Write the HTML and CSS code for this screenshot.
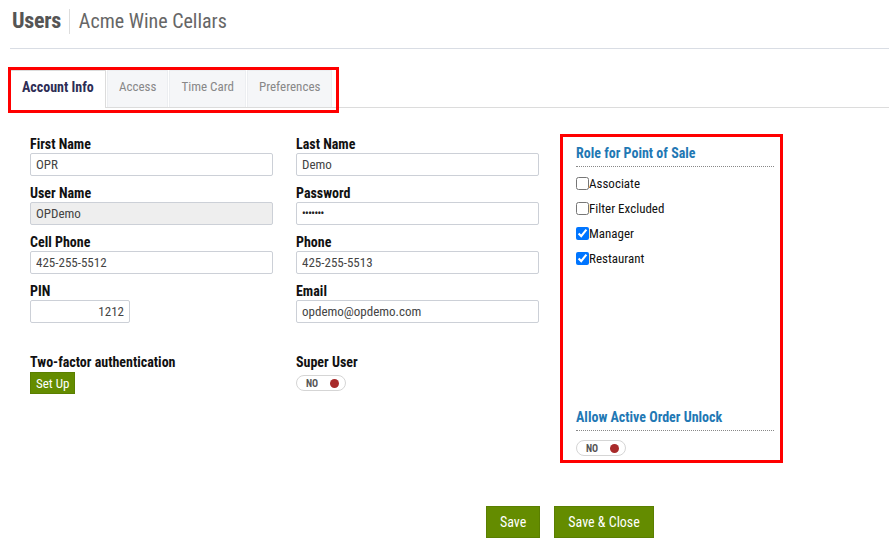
FILE: index.html
```html
<!DOCTYPE html>
<html lang="en">
<head>
<meta charset="UTF-8">
<meta name="viewport" content="width=device-width, initial-scale=1.0">
<title>Users - Acme Wine Cellars</title>
<link rel="stylesheet" href="styles.css">
</head>
<body>

<div class="page-head">
  <h1>Users</h1>
  <span class="sep"></span>
  <span class="store">Acme Wine Cellars</span>
</div>

<div class="tabs">
  <div class="tab active">Account Info</div>
  <div class="tab">Access</div>
  <div class="tab">Time Card</div>
  <div class="tab">Preferences</div>
  <div class="mark mark-tabs"></div>
</div>

<div class="content">
  <div class="form">
    <div class="field">
      <label>First Name</label>
      <input type="text" value="OPR">
    </div>
    <div class="field">
      <label>Last Name</label>
      <input type="text" value="Demo">
    </div>
    <div class="field">
      <label>User Name</label>
      <input type="text" value="OPDemo" class="readonly" readonly>
    </div>
    <div class="field">
      <label>Password</label>
      <input type="text" value="•••••••" class="pw">
    </div>
    <div class="field">
      <label>Cell Phone</label>
      <input type="text" value="425-255-5512">
    </div>
    <div class="field">
      <label>Phone</label>
      <input type="text" value="425-255-5513">
    </div>
    <div class="field">
      <label>PIN</label>
      <input type="text" value="1212" class="pin">
    </div>
    <div class="field">
      <label>Email</label>
      <input type="text" value="opdemo@opdemo.com">
    </div>
    <div class="field extra">
      <label>Two-factor authentication</label>
      <button class="btn btn-small">Set Up</button>
    </div>
    <div class="field extra">
      <label>Super User</label>
      <div class="toggle"><span>NO</span><i></i></div>
    </div>
  </div>

  <div class="panel">
    <h3>Role for Point of Sale</h3>
    <label class="check"><input type="checkbox">Associate</label>
    <label class="check"><input type="checkbox">Filter Excluded</label>
    <label class="check"><input type="checkbox" checked>Manager</label>
    <label class="check"><input type="checkbox" checked>Restaurant</label>

    <div class="panel-bottom">
      <h3>Allow Active Order Unlock</h3>
      <div class="toggle"><span>NO</span><i></i></div>
    </div>
  </div>
</div>

<div class="actions">
  <button class="btn">Save</button>
  <button class="btn">Save &amp; Close</button>
</div>

</body>
</html>
```

FILE: styles.css
```css
body {
  margin: 0;
  font-family: "Roboto Condensed", "Liberation Sans Narrow", "DejaVu Sans Condensed", sans-serif;
  color: #111;
  background: #fff;
}

.page-head {
  display: flex;
  align-items: flex-start;
  box-sizing: border-box;
  height: 49px;
  margin-left: 10px;
  padding: 8px 0 0 2px;
  border-bottom: 1px solid #d9dde4;
}

.page-head h1 {
  margin: 0;
  font-size: 22px;
  line-height: 26px;
  font-weight: bold;
  color: #555;
  letter-spacing: -0.3px;
}

.page-head .sep {
  width: 1px;
  height: 25px;
  background: #ddd;
  margin: 1px 9px 0 8px;
}

.page-head .store {
  font-size: 20px;
  line-height: 26px;
  color: #666;
}

.tabs {
  position: relative;
  display: flex;
  margin: 21px 0 0 10px;
  border-bottom: 1px solid #dcdcdc;
  height: 37px;
}

.tab {
  display: flex;
  align-items: center;
  padding: 0 11px 5px;
  font-size: 13px;
  color: #888;
  background: #f5f6f8;
  border: 1px solid #eceef1;
  border-bottom: none;
  margin-right: 1px;
}

.tab.active {
  width: 72px;
  font-size: 14px;
  background: #fff;
  color: #2d2d55;
  font-weight: bold;
  border-color: #dcdcdc;
  margin-bottom: -1px;
}

/* red annotation boxes */
.mark {
  position: absolute;
  border: 3px solid #f00;
  pointer-events: none;
}

.mark-tabs {
  left: -2px;
  top: -3px;
  width: 325px;
  height: 40px;
}

.content {
  display: flex;
  align-items: flex-start;
  padding: 26px 0 0 30px;
}

.form {
  display: grid;
  grid-template-columns: 243px 243px;
  column-gap: 23px;
  row-gap: 8px;
  padding-top: 1px;
}

.field label {
  display: block;
  font-size: 14px;
  font-weight: bold;
  line-height: 18px;
}

.field input {
  box-sizing: border-box;
  width: 100%;
  height: 23px;
  padding: 0 5px;
  border: 1px solid #ccd0d7;
  border-radius: 2px;
  font-family: inherit;
  font-size: 13px;
  color: #444;
}

.field input.readonly {
  background: #eee;
}

.field input.pw {
  color: #222;
  font-size: 10px;
  font-weight: bold;
  letter-spacing: -0.5px;
}

.field input.pin {
  width: 100px;
  text-align: right;
}

.field.extra {
  margin-top: 22px;
}

.btn {
  font-family: inherit;
  font-size: 14px;
  color: #fff;
  background: #648c00;
  border: 1px solid #5a7f00;
  height: 32px;
  padding: 0 13px;
  cursor: pointer;
}

.btn-small {
  height: 22px;
  padding: 0 5px;
  font-size: 13px;
  margin-top: 1px;
}

.toggle {
  display: flex;
  align-items: center;
  justify-content: space-between;
  box-sizing: border-box;
  width: 50px;
  height: 16px;
  margin-top: 4px;
  padding: 0 6px 0 9px;
  border: 1px solid #d5d5d5;
  border-radius: 8px;
}

.toggle span {
  font-size: 10px;
  font-weight: bold;
  color: #555;
}

.toggle i {
  width: 9px;
  height: 9px;
  border-radius: 50%;
  background: #a82a2a;
}

.panel {
  display: flex;
  flex-direction: column;
  box-sizing: border-box;
  width: 223px;
  height: 329px;
  margin: 0 0 0 21px;
  padding: 8px 6px 4px 13px;
  border: 3px solid #f00;
}

.panel h3 {
  margin: 0 0 4px;
  padding-bottom: 5px;
  font-size: 14px;
  color: #1f78b4;
  border-bottom: 1px dotted #888;
}

.check {
  display: flex;
  align-items: center;
  height: 25px;
  font-size: 13px;
  color: #111;
}

.check input {
  margin: 0;
  width: 13px;
  height: 13px;
}

.panel-bottom {
  margin-top: auto;
}

.panel-bottom h3 {
  margin-bottom: 9px;
}

.panel-bottom .toggle {
  margin-top: 0;
}

.actions {
  display: flex;
  gap: 14px;
  padding: 43px 0 0 486px;
}
```
